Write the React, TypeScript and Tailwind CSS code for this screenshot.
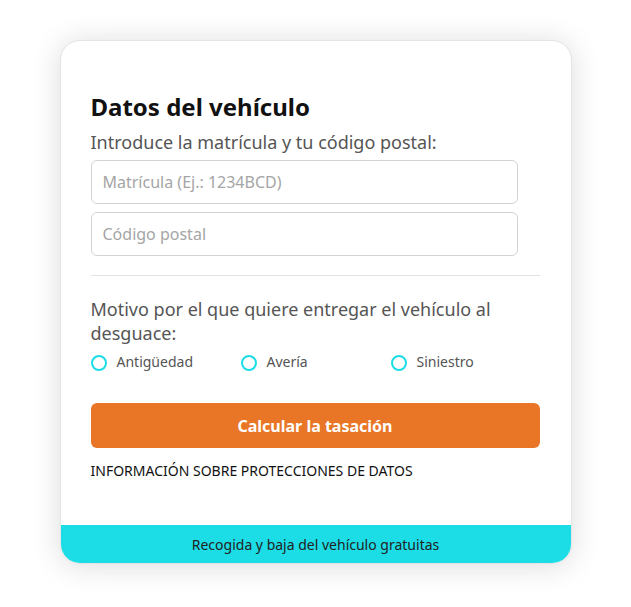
export default function App() {
  const font = { fontFamily: '"Noto Sans", sans-serif' };
  return (
    <div className="min-h-[607px] bg-white pt-[40px] flex justify-center" style={font}>
      <div className="w-[512px] h-[524px] rounded-[20px] overflow-hidden bg-white border border-[#e4e4e4] shadow-[0_2px_30px_rgba(0,0,0,0.14)] flex flex-col">
        <div className="flex-1 pl-[30px] pr-[31px] pt-[50px]">
          <h2 className="text-[24px] leading-[32px] font-bold text-[#111]">Datos del vehículo</h2>
          <p className="mt-[7px] text-[18px] leading-[24px] text-[#555]">Introduce la matrícula y tu código postal:</p>
          <div className="mt-[6px] w-[427px] flex flex-col gap-[8px]">
            <input className="h-[44px] rounded-[6px] border border-[#d3d3d3] px-[11px] text-[16px] placeholder:text-[#a5a5a5] outline-none" placeholder="Matrícula (Ej.: 1234BCD)" />
            <input className="h-[44px] rounded-[6px] border border-[#d3d3d3] px-[11px] text-[16px] placeholder:text-[#a5a5a5] outline-none" placeholder="Código postal" />
          </div>
          <div className="mt-[19px] h-px bg-[#e2e2e2]" />
          <p className="mt-[21px] text-[18px] leading-[24px] text-[#555]">Motivo por el que quiere entregar el vehículo al desguace:</p>
          <div className="mt-[7px] grid grid-cols-[150px_150px_150px] text-[14px] leading-[20px] text-[#555]">
            {["Antigüedad", "Avería", "Siniestro"].map((l) => (
              <label key={l} className="flex items-center gap-[10px]">
                <span className="mt-[2px] w-[16px] h-[16px] rounded-full border-2 border-[#1cdde6]" />
                {l}
              </label>
            ))}
          </div>
          <button className="mt-[31px] w-full h-[45px] rounded-[6px] bg-[#e87626] text-white font-bold text-[16px]">Calcular la tasación</button>
          <p className="mt-[13px] text-[14px] leading-[20px] text-[#111]">INFORMACIÓN SOBRE PROTECCIONES DE DATOS</p>
        </div>
        <div className="h-[38px] bg-[#1cdde6] flex items-center justify-center text-[14px] text-[#222]">Recogida y baja del vehículo gratuitas</div>
      </div>
    </div>
  );
}
